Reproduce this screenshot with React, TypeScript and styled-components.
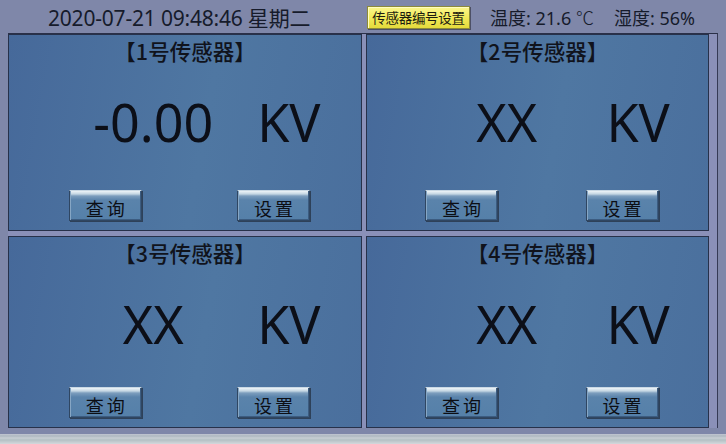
import React from 'react';
import styled, { createGlobalStyle } from 'styled-components';

const GlobalStyle = createGlobalStyle`
  html, body {
    margin: 0;
    padding: 0;
    background: #8088aa;
  }
  body {
    font-family: "Noto Sans", "Noto Sans CJK SC", sans-serif;
  }
`;

const Screen = styled.div`
  width: 726px;
  height: 444px;
  overflow: hidden;
  background: #7f87a9;
  display: flex;
  flex-direction: column;
`;

const Header = styled.header`
  height: 33px;
  display: grid;
  grid-template-columns: 367px auto auto auto 1fr;
  align-items: center;
  color: #161b2b;
`;

const DateText = styled.div`
  padding-left: 48px;
  font-size: 21px;
  letter-spacing: -0.2px;
`;

const YellowButton = styled.button`
  width: 103px;
  height: 23px;
  margin-top: 1px;
  padding: 0;
  border: 1px solid #8c8a3a;
  background: linear-gradient(to bottom, #fbf68c 0%, #f2ea5a 50%, #e4da3c 100%);
  box-shadow: 1px 1px 0 #4d5066, inset 1px 1px 0 #fffcc0;
  font-family: "Noto Sans CJK SC", sans-serif;
  font-size: 13.5px;
  color: #1c1c10;
  letter-spacing: -0.3px;
`;

const Reading = styled.div<{ $gap: number }>`
  margin-left: ${(p) => p.$gap}px;
  font-size: 18px;
  white-space: nowrap;
`;

const Unit = styled.span`
  font-family: "Noto Sans CJK SC", sans-serif;
  font-weight: 300;
`;

const Frame = styled.div`
  width: 701px;
  margin-left: 8px;
  padding-right: 8px;
  border-right: 1px solid #353a55;
  display: grid;
  grid-template-columns: 354px 343px;
  grid-template-rows: 197px 192px;
  column-gap: 4px;
  row-gap: 5px;
  background: #8a90b8;
  border-top: 1px solid #2a3048;
`;

const Panel = styled.section`
  border: 1px solid #27314a;
  background: linear-gradient(100deg, #46699a 0%, #4f77a2 55%, #4a6f9d 100%);
  display: flex;
  flex-direction: column;
  padding-bottom: 9px;
  color: #0c0f18;
`;

const Title = styled.h3`
  margin: 0;
  height: 32px;
  line-height: 32px;
  text-align: center;
  font-family: "Noto Sans CJK SC", sans-serif;
  font-size: 21.5px;
  font-weight: 500;
  color: #10131c;
`;

const ValueRow = styled.div`
  margin-top: 27px;
  height: 56px;
  display: grid;
  grid-template-columns: 58fr 19fr;
  padding: 0 11% 0 12%;
  align-items: center;
  font-size: 52px;
  line-height: 56px;
  text-align: center;
`;

const Cell = styled.span`
  white-space: nowrap;
`;

const ButtonRow = styled.div`
  margin-top: auto;
  display: flex;
  justify-content: space-between;
  padding: 0 14.5% 0 17%;
`;

const ActionButton = styled.button`
  width: 73px;
  height: 31px;
  padding: 4px 0 0;
  border: 1px solid #2f4662;
  border-top-color: #c9d8e4;
  background: linear-gradient(
    to bottom,
    #eef4f8 0px,
    #c4d6e3 3px,
    #7c9dbd 5px,
    #5a83ab 9px,
    #5580a9 100%
  );
  box-shadow: inset 1px 0 0 #86a6c4, inset -1px -1px 0 #3c5c80, 1px 1px 0 #2e4159;
  font-family: "Noto Sans CJK SC", sans-serif;
  font-size: 18px;
  line-height: 24px;
  letter-spacing: 3px;
  text-indent: 3px;
  color: #0c0e14;
`;

const Footer = styled.div`
  flex: 1;
  margin-top: 6px;
  background: linear-gradient(
    to bottom,
    #c2c6d2 0px,
    #aeb8c0 2px,
    #c9cfd4 4px,
    #b4c0c4 6px,
    #d4d8dc 100%
  );
`;

type Sensor = { id: number; value: string };

const sensors: Sensor[] = [
  { id: 1, value: '-0.00' },
  { id: 2, value: 'XX' },
  { id: 3, value: 'XX' },
  { id: 4, value: 'XX' },
];

const SensorPanel = ({ sensor }: { sensor: Sensor }) => (
  <Panel>
    <Title>【{sensor.id}号传感器】</Title>
    <ValueRow>
      <Cell>{sensor.value}</Cell>
      <Cell>KV</Cell>
    </ValueRow>
    <ButtonRow>
      <ActionButton>查询</ActionButton>
      <ActionButton>设置</ActionButton>
    </ButtonRow>
  </Panel>
);

const App = () => {
  return (
    <>
      <GlobalStyle />
      <Screen>
        <Header>
          <DateText>2020-07-21 09:48:46 星期二</DateText>
          <YellowButton>传感器编号设置</YellowButton>
          <Reading $gap={20}>
            温度: 21.6 <Unit>℃</Unit>
          </Reading>
          <Reading $gap={20}>湿度: 56%</Reading>
        </Header>
        <Frame>
          {sensors.map((s) => (
            <SensorPanel key={s.id} sensor={s} />
          ))}
        </Frame>
        <Footer />
      </Screen>
    </>
  );
};

export default App;
